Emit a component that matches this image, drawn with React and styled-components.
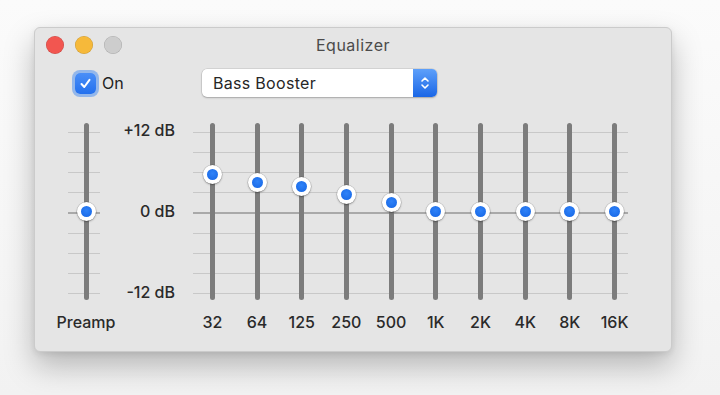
import React from 'react';
import styled, { createGlobalStyle } from 'styled-components';

const GlobalStyle = createGlobalStyle`
  html, body {
    margin: 0;
    padding: 0;
    background: #fafafa;
  }
  body {
    font-family: Inter, "Liberation Sans", sans-serif;
    -webkit-font-smoothing: antialiased;
  }
`

const TRACK_H = 177;
const DB_PX = 6.67;

const bands = [
  { label: '32', value: 5.5 },
  { label: '64', value: 4.3 },
  { label: '125', value: 3.7 },
  { label: '250', value: 2.5 },
  { label: '500', value: 1.3 },
  { label: '1K', value: 0 },
  { label: '2K', value: 0 },
  { label: '4K', value: 0 },
  { label: '8K', value: 0 },
  { label: '16K', value: 0 },
];

const Page = styled.div`
  width: 720px;
  height: 395px;
  box-sizing: border-box;
  padding: 27px 0 0 34px;
  overflow: hidden;
  background: linear-gradient(#fbfbfb, #f2f2f2);
`
const Window = styled.div`
  width: 638px;
  height: 325px;
  box-sizing: border-box;
  background: #e5e5e5;
  border: 1px solid #cbcbcb;
  border-radius: 6px;
  box-shadow: 0 14px 30px rgba(0, 0, 0, 0.25), 0 2px 6px rgba(0, 0, 0, 0.08);
  display: flex;
  flex-direction: column;
`
const TitleBar = styled.div`
  height: 33px;
  padding: 0 11px;
  display: grid;
  grid-template-columns: 1fr auto 1fr;
  align-items: center;
`
const Lights = styled.div`
  display: flex;
  gap: 11px;
`
const Light = styled.span`
  width: 18px;
  height: 18px;
  border-radius: 50%;
  background: ${p => p.color};
  box-shadow: inset 0 0 0 0.5px rgba(0, 0, 0, 0.18);
`
const Title = styled.div`
  font-size: 16px;
  letter-spacing: 0.5px;
  color: #4b4b4b;
`
const Controls = styled.div`
  margin-top: 8px;
  height: 28px;
  padding-left: 40px;
  display: flex;
  align-items: center;
`
const CheckGroup = styled.label`
  width: 127px;
  display: flex;
  align-items: center;
  gap: 6px;
  font-size: 16px;
  color: #222;
`
const CheckBox = styled.span`
  width: 21px;
  height: 21px;
  border-radius: 5px;
  background: linear-gradient(#4b8ff7, #2370ee);
  box-shadow: 0 0 0 3px rgba(80, 145, 240, 0.55);
  display: flex;
  align-items: center;
  justify-content: center;
`
const Select = styled.div`
  width: 235px;
  height: 28px;
  box-sizing: border-box;
  background: #fff;
  border-radius: 5px;
  box-shadow: 0 0 0 0.5px rgba(0, 0, 0, 0.14), 0 1px 2px rgba(0, 0, 0, 0.22);
  display: flex;
  align-items: center;
  overflow: hidden;
`
const SelectText = styled.span`
  flex: 1;
  padding-left: 11px;
  font-size: 16px;
  letter-spacing: 0.3px;
  color: #262626;
`
const Stepper = styled.span`
  width: 24px;
  height: 100%;
  background: linear-gradient(#5ea0fa, #1a66e6);
  display: flex;
  align-items: center;
  justify-content: center;
`
const SliderRow = styled.div`
  margin-top: 26px;
  padding-left: 31px;
  display: flex;
  align-items: flex-start;
`
const Column = styled.div`
  width: ${p => p.width}px;
  display: flex;
  flex-direction: column;
  align-items: center;
`
const TrackBox = styled.div`
  position: relative;
  width: 100%;
  height: ${TRACK_H}px;
  display: flex;
  justify-content: center;
`
const Track = styled.div`
  width: 5px;
  height: 100%;
  border-radius: 3px;
  background: #7c7c7c;
  position: relative;
  z-index: 1;
`
const Knob = styled.div`
  position: absolute;
  left: 50%;
  width: 19px;
  height: 19px;
  margin: -9.5px 0 0 -9.5px;
  border-radius: 50%;
  background: #fff;
  box-shadow: 0 0 0 0.5px rgba(0, 0, 0, 0.18), 0 1px 2px rgba(0, 0, 0, 0.3);
  display: flex;
  align-items: center;
  justify-content: center;
  z-index: 2;

  &::after {
    content: '';
    width: 11px;
    height: 11px;
    border-radius: 50%;
    background: radial-gradient(circle at 50% 40%, #2f82f8, #1565e4);
  }
`
const Ticks = styled.div`
  position: absolute;
  top: 9px;
  height: 162px;
  left: ${p => p.left}px;
  right: ${p => p.right}px;
  display: flex;
  flex-direction: column;
  justify-content: space-between;
`
const Tick = styled.div`
  height: ${p => (p.zero ? 2 : 1)}px;
  background: ${p => (p.zero ? '#a9a9a9' : '#c8c8c8')};
`
const FreqLabel = styled.div`
  margin-top: 12px;
  line-height: 20px;
  font-size: 16px;
  font-weight: 500;
  color: #2a2a2a;
  white-space: nowrap;
`
const DbColumn = styled.div`
  width: 84px;
  height: 182px;
  margin-top: -3px;
  padding-right: 15px;
  box-sizing: border-box;
  display: flex;
  flex-direction: column;
  justify-content: space-between;
  align-items: flex-end;
`
const DbLabel = styled.div`
  line-height: 20px;
  font-size: 16px;
  font-weight: 500;
  color: #2a2a2a;
`
const BandArea = styled.div`
  position: relative;
  display: grid;
  grid-template-columns: repeat(10, 44.7px);
`

function TickLines({ left, right }) {
  return (
    <Ticks left={left} right={right}>
      {Array.from({ length: 9 }).map((_, i) => (
        <Tick key={i} zero={i === 4} />
      ))}
    </Ticks>
  );
}

function Slider({ value, label, width }) {
  const top = TRACK_H / 2 - value * DB_PX;
  return (
    <Column width={width}>
      <TrackBox>
        <Track />
        <Knob style={{ top }} />
      </TrackBox>
      <FreqLabel>{label}</FreqLabel>
    </Column>
  );
}

export default function App() {
  return (
    <Page>
      <GlobalStyle />
      <Window>
        <TitleBar>
          <Lights>
            <Light color="#f25650" />
            <Light color="#f6b93a" />
            <Light color="#cdcdcd" />
          </Lights>
          <Title>Equalizer</Title>
          <span />
        </TitleBar>
        <Controls>
          <CheckGroup>
            <CheckBox>
              <svg width="13" height="13" viewBox="0 0 13 13">
                <path d="M2.5 7 L5.3 10 L10.5 2.8" fill="none" stroke="#fff" strokeWidth="2" strokeLinecap="round" strokeLinejoin="round" />
              </svg>
            </CheckBox>
            On
          </CheckGroup>
          <Select>
            <SelectText>Bass Booster</SelectText>
            <Stepper>
              <svg width="10" height="16" viewBox="0 0 10 16">
                <path d="M2 6 L5 3 L8 6 M2 10 L5 13 L8 10" fill="none" stroke="#fff" strokeWidth="1.6" strokeLinecap="round" strokeLinejoin="round" />
              </svg>
            </Stepper>
          </Select>
        </Controls>
        <SliderRow>
          <Column width={40}>
            <TrackBox>
              <TickLines left={2} right={6} />
              <Track />
              <Knob style={{ top: TRACK_H / 2 }} />
            </TrackBox>
            <FreqLabel>Preamp</FreqLabel>
          </Column>
          <DbColumn>
            <DbLabel>+12 dB</DbLabel>
            <DbLabel>0 dB</DbLabel>
            <DbLabel>-12 dB</DbLabel>
          </DbColumn>
          <BandArea>
            <TickLines left={3} right={9} />
            {bands.map(b => (
              <Slider key={b.label} value={b.value} label={b.label} width={44.7} />
            ))}
          </BandArea>
        </SliderRow>
      </Window>
    </Page>
  );
}
